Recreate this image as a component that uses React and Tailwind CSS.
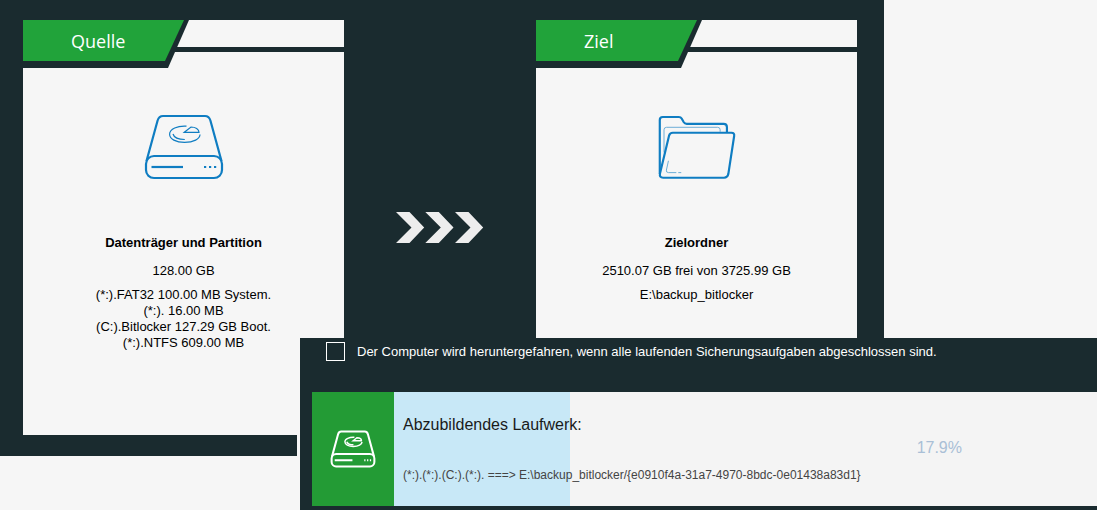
import React from "react";

const PARTITIONS = [
  "(*:).FAT32 100.00 MB System.",
  "(*:). 16.00 MB",
  "(C:).Bitlocker 127.29 GB Boot.",
  "(*:).NTFS 609.00 MB",
];

function DiskIcon({ className, strokeWidth = 2.2, thinWidth = 1.2 }) {
  return (
    <svg className={className} viewBox="0 0 78 64" fill="none" stroke="currentColor" strokeWidth={strokeWidth} overflow="visible" aria-hidden="true">
      <rect x="1" y="41" width="76" height="22" rx="8" />
      <path d="M1.5 46 L12.6 5.5 Q14 1 18 1 H60 Q64 1 65.4 5.5 L76.5 46" />
      <path d="M6.5 52 H38" />
      <path d="M59 52 h2.2 M64 52 h2.2 M69 52 h2.2" />
      <g strokeWidth={thinWidth}>
        <path d="M41.5 11.2 C32.5 10.6 24.6 14 24.6 19.3 C24.6 24 31 27.4 39.5 27.4 C48.5 27.4 55 24 55 19.6" />
        <path d="M39.3 17.3 L46 12 C50.5 12 54 14.2 54 17.3 Z" />
        <path d="M28 19 C29 22.4 33 24.5 39.8 24.5" />
      </g>
    </svg>
  );
}

function FolderIcon({ className }) {
  return (
    <svg className={className} viewBox="0 0 78 65" fill="none" stroke="currentColor" strokeWidth="2.2" aria-hidden="true">
      <path d="M1.2 60 V5 Q1.2 2 4.2 2 H20.5 Q22.5 2 23.4 3.6 L25.6 7.4 Q26.6 9 28.6 9 H66 Q69.4 9 69.4 12.4 V18" />
      <path d="M14.4 18 H74 Q77.4 18 76.7 21.6 L70.8 60 Q70 63.7 66.5 63.7 H4.6 Q0.6 63.7 1.4 59.5 L10.6 21 Q11.4 18 14.4 18 Z" />
      <g strokeWidth="1" opacity="0.6">
        <path d="M5.5 38 V15 Q5.5 12.5 8 12.5 H60 Q62.5 12.5 62.5 15 V17" />
        <path d="M10 46.5 L7.9 56 Q7.5 58.5 10 58.5 H18 M20 58.5 H23" />
      </g>
    </svg>
  );
}

function Chevrons() {
  return (
    <svg className="h-[31px] w-[88px]" viewBox="0 0 88 31" fill="#ededed" aria-hidden="true">
      {[0, 29.3, 59].map((x) => (
        <path key={x} transform={`translate(${x} 0)`} d="M0 0 H13.5 L28.2 15.5 L13.5 31 H0 L15.5 15.5 Z" />
      ))}
    </svg>
  );
}

function BackupCard({ label, icon, title, size, details }) {
  return (
    <section className="min-w-0 flex-1 bg-[#f6f6f6] text-[13px] leading-4 text-black">
      {/* slanted tab with the dark rule running out of it */}
      <div className="flex items-start">
        <div className="h-12 w-[166px] bg-[#1a2b2f] [clip-path:polygon(0_0,100%_0,145px_100%,0_100%)]">
          <h2 className="flex h-[41px] w-[161px] items-center bg-[#21a33a] pl-12 font-['Open_Sans',sans-serif] text-lg font-medium text-white [clip-path:polygon(0_0,100%_0,142px_100%,0_100%)]">
            {label}
          </h2>
        </div>
        <div className="-ml-4 mt-[27px] h-[5px] flex-1 bg-[#1a2b2f]"></div>
      </div>

      <div className="flex flex-col items-center pb-[84px] pt-[47px] text-center">
        {icon}
        <h3 className="mt-14 font-bold">{title}</h3>
        <p className="mt-3">{size}</p>
        <ul className="mt-2">
          {details.map((line) => (
            <li key={line}>{line}</li>
          ))}
        </ul>
      </div>
    </section>
  );
}

function ProgressPanel() {
  return (
    <div className="absolute left-[297px] right-0 top-[338px] border-l-3 border-[#f6f6f6] bg-[#1a2b2f] pb-1 pl-3 pt-1">
      <label className="ml-[14px] flex items-center gap-3 text-[13px] leading-[19px] text-white">
        <input type="checkbox" className="size-[19px] shrink-0 appearance-none border border-white checked:bg-[#21a33a]" />
        Der Computer wird heruntergefahren, wenn alle laufenden Sicherungsaufgaben abgeschlossen sind.
      </label>

      <div className="mt-[31px] flex bg-[#f4f4f4]">
        <div className="flex w-[82px] shrink-0 items-center justify-center bg-[#239b35]">
          <DiskIcon className="h-9 w-11 text-white" strokeWidth={3.6} thinWidth={2.6} />
        </div>
        <div className="relative flex-1">
          <div className="absolute inset-y-0 left-0 w-1/4 bg-[#c8e8f7]"></div>
          <div className="relative flex items-center justify-between pb-[23px] pl-[9px] pr-[135px] pt-[21px]">
            <div>
              <h3 className="text-base leading-6 text-[#1a1a1a]">Abzubildendes Laufwerk:</h3>
              <p className="mt-[30px] text-xs leading-4 text-[#444]">
                {"(*:).(*:).(C:).(*:). ===> E:\\backup_bitlocker/{e0910f4a-31a7-4970-8bdc-0e01438a83d1}"}
              </p>
            </div>
            <span className="text-base text-[#a9bfd6]">17.9%</span>
          </div>
        </div>
      </div>
    </div>
  );
}

export default function App() {
  return (
    <div className="relative min-h-screen bg-[#f6f6f6] font-['Liberation_Sans',Arial,sans-serif]">
      <main className="mr-[213px] flex bg-[#1a2b2f] pb-[21px] pl-[23px] pr-[27px] pt-5">
        <BackupCard
          label="Quelle"
          icon={<DiskIcon className="h-16 w-[78px] text-[#0f7dc2]" />}
          title="Datenträger und Partition"
          size="128.00 GB"
          details={PARTITIONS}
        />
        <div className="flex w-48 shrink-0 items-center justify-center">
          <Chevrons />
        </div>
        <BackupCard
          label="Ziel"
          icon={<FolderIcon className="h-16 w-[78px] text-[#0f7dc2]" />}
          title="Zielordner"
          size="2510.07 GB frei von 3725.99 GB"
          details={["E:\\backup_bitlocker"]}
        />
      </main>
      <ProgressPanel />
    </div>
  );
}
